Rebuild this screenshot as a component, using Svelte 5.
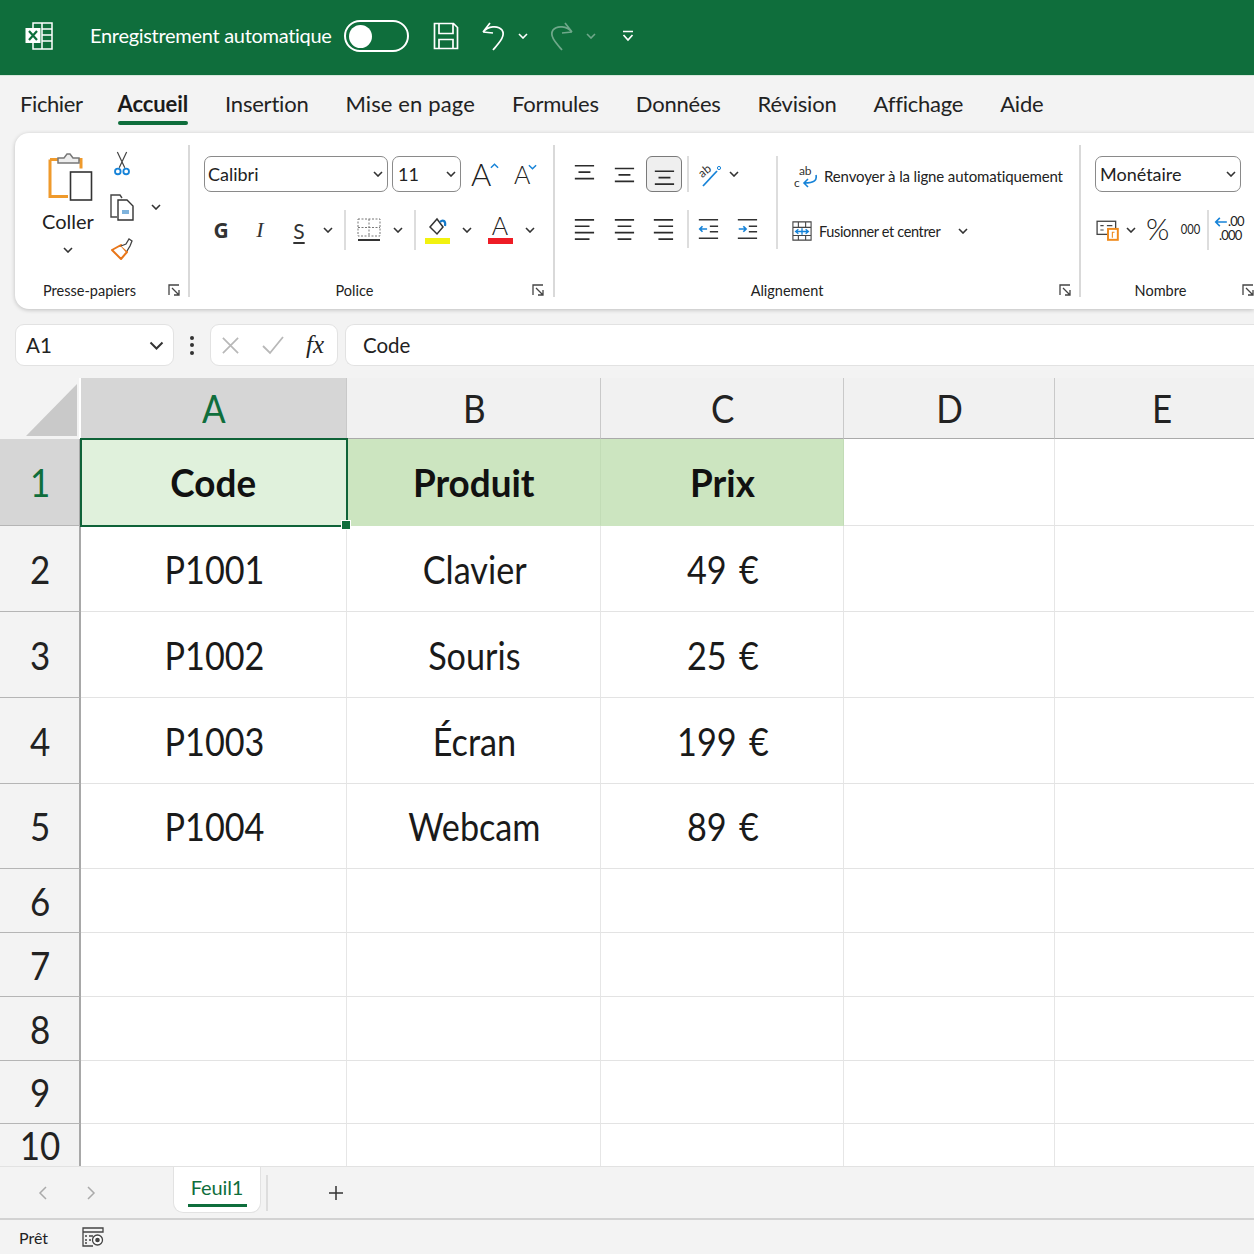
<script>
  const cols = ['A','B','C','D','E'];
  const rows = [
    { n: 1, h: 87, cells: ['Code','Produit','Prix','',''], head: true },
    { n: 2, h: 86, cells: ['P1001','Clavier','49 €','',''] },
    { n: 3, h: 86, cells: ['P1002','Souris','25 €','',''] },
    { n: 4, h: 86, cells: ['P1003','Écran','199 €','',''] },
    { n: 5, h: 85, cells: ['P1004','Webcam','89 €','',''] },
    { n: 6, h: 64, cells: ['','','','',''] },
    { n: 7, h: 64, cells: ['','','','',''] },
    { n: 8, h: 64, cells: ['','','','',''] },
    { n: 9, h: 63, cells: ['','','','',''] },
    { n: 10, h: 43, cells: ['','','','',''] }
  ];
  const tabs = ['Fichier','Accueil','Insertion','Mise en page','Formules','Données','Révision','Affichage','Aide'];
  const template = rows.map(r => r.h + 'px').join(' ');
</script>

{#snippet chev(cls = '')}
  <svg class="chev {cls}" viewBox="0 0 10 6"><path d="M1 1l4 4 4-4" /></svg>
{/snippet}

{#snippet launcher()}
  <svg class="launch" viewBox="0 0 12 12"><path d="M1 11V1h10M4 4l7 7M11 6v5H6" /></svg>
{/snippet}

{#snippet lines(kind)}
  <svg class="lines" viewBox="0 0 24 24">
    {#if kind === 'top'}<path d="M2 3h21M6 10h13M2 17h21" />
    {:else if kind === 'mid'}<path d="M2 6h21M6 13h13M2 20h21" />
    {:else if kind === 'bot'}<path d="M2 9h21M6 16h13M2 23h21" />
    {:else if kind === 'left'}<path d="M2 2h21M2 9h16M2 16h21M2 23h16" />
    {:else if kind === 'center'}<path d="M2 2h21M5 9h15M2 16h21M5 23h15" />
    {:else}<path d="M2 2h21M7 9h16M2 16h21M7 23h16" />{/if}
  </svg>
{/snippet}

<div class="app">
  <header class="title">
    <svg class="xl" viewBox="0 0 30 30">
      <path class="w" d="M9 2h19v26H9zM18 2v26M18 8h10M18 14h10M18 20h10M9 6V2M9 28v-4" />
      <rect x="1.500" y="7" width="15" height="15" fill="#fff" />
      <path d="M5 10l8 9M13 10l-8 9" stroke="#0f6e3c" stroke-width="2.200" fill="none" />
    </svg>
    <span class="autosave">Enregistrement automatique</span>
    <span class="toggle"><i></i></span>
    <svg class="qa save" viewBox="0 0 26 28"><path class="w" d="M1.500 1.500h19l4 4v21h-23zM6 1.500v10h14v-10M6 26.500v-9h14v9" /></svg>
    <svg class="qa undo" viewBox="0 0 26 30"><path class="w" d="M2 11l7-9M2 11l10 1M2 11c5-6 15-7 19-2 4 6-3 13-9 20" /></svg>
    {@render chev('wchev first')}
    <svg class="qa redo" viewBox="0 0 26 30"><path class="w" d="M24 11l-7-9M24 11l-10 1M24 11c-5-6-15-7-19-2-4 6 3 13 9 20" /></svg>
    {@render chev('wchev dim')}
    <svg class="more" viewBox="0 0 12 12"><path class="w" d="M1 1.500h10M1.500 5l4.500 5 4.500-5" /></svg>
  </header>

  <nav class="tabs">
    {#each tabs as t, i}
      <span class="tab" class:on={i === 1}>{t}</span>
    {/each}
  </nav>

  <section class="ribbon">
    <div class="group clip">
      <div class="clip-body">
        <div class="paste">
          <svg class="paste-ico" viewBox="0 0 46 50">
            <path d="M2 7.500h31v9M2 7.500v37h18" fill="none" stroke="#ef9a2c" stroke-width="3" />
            <path d="M10 11V6h6l3-4h3l3 4h6v5z" fill="#eee" stroke="#777" stroke-width="1.500" />
            <rect x="22.500" y="20" width="21" height="28" fill="#fff" stroke="#333" stroke-width="1.600" />
          </svg>
          <span class="coller">Coller</span>
          {@render chev()}
        </div>
        <div class="tools">
          <svg class="tool" viewBox="0 0 20 28"><path d="M5 1l8 17M15 1L7 18" stroke="#444" stroke-width="1.300" fill="none" /><circle cx="5.500" cy="22" r="3" fill="none" stroke="#1683d8" stroke-width="2" /><circle cx="14.500" cy="22" r="3" fill="none" stroke="#1683d8" stroke-width="2" /></svg>
          <div class="copy-row">
            <svg class="tool" viewBox="0 0 26 28"><path d="M8 24H2V2h9l2 3" fill="none" stroke="#444" stroke-width="1.400" /><path d="M9 7h9l6 6v14H9z" fill="#fff" stroke="#333" stroke-width="1.400" /><rect x="13" y="17" width="7" height="4" fill="#7fb3dc" /></svg>
            {@render chev()}
          </div>
          <svg class="tool" viewBox="0 0 24 24"><path d="M2 13l9-5 6 7-6 7z" fill="#fff" stroke="#e8761a" stroke-width="2" stroke-linejoin="round" /><path d="M11 9l5-2 3-5 3 2-2 5-3 5" fill="#fff" stroke="#444" stroke-width="1.300" /></svg>
        </div>
      </div>
      <footer><span>Presse-papiers</span>{@render launcher()}</footer>
    </div>

    <div class="group police">
      <div class="row r1">
        <div class="select font"><span>Calibri</span>{@render chev()}</div>
        <div class="select size"><span>11</span>{@render chev()}</div>
        <span class="grow">A<svg viewBox="0 0 10 6"><path d="M1 5l4-4 4 4" /></svg></span>
        <span class="grow small">A<svg viewBox="0 0 10 6"><path d="M1 1l4 4 4-4" /></svg></span>
      </div>
      <div class="row r2">
        <b class="g">G</b>
        <i class="it">I</i>
        <span class="s">S</span>
        {@render chev()}
        <span class="vr"></span>
        <svg class="border-ico" viewBox="0 0 24 24"><path d="M1 1h22v17H1zM12 1v17M1 9.500h22" fill="none" stroke="#777" stroke-width="1" stroke-dasharray="2 1.500" /><path d="M1 22h22" stroke="#333" stroke-width="2" /></svg>
        {@render chev()}
        <span class="vr"></span>
        <div class="colour">
          <svg viewBox="0 0 24 20"><path d="M5 11l7-8 6 8-6 7z" fill="#fff" stroke="#333" stroke-width="1.500" /><path d="M15 6c3-3 6-1 5 4" fill="none" stroke="#1479c9" stroke-width="2.200" /></svg>
          <span class="bar yellow"></span>
        </div>
        {@render chev()}
        <div class="colour">
          <span class="fc">A</span>
          <span class="bar red"></span>
        </div>
        {@render chev()}
      </div>
      <footer><span>Police</span>{@render launcher()}</footer>
    </div>

    <div class="group align">
      <div class="align-body">
        <div class="align-icons">
          <div class="row a1">
            <span class="ib">{@render lines('top')}</span>
            <span class="ib">{@render lines('mid')}</span>
            <span class="ib sel">{@render lines('bot')}</span>
            <span class="vr"></span>
            <svg class="orient" viewBox="0 0 28 28"><text x="4" y="15" transform="rotate(-40 10 12)">ab</text><path d="M8 26L22 11" stroke="#1683d8" stroke-width="1.800" /><circle cx="24" cy="8" r="1.600" fill="none" stroke="#1683d8" /></svg>
            {@render chev()}
          </div>
          <div class="row a2">
            <span class="ib">{@render lines('left')}</span>
            <span class="ib">{@render lines('center')}</span>
            <span class="ib">{@render lines('right')}</span>
            <span class="vr"></span>
            <svg class="indent" viewBox="0 0 24 24"><path d="M2 2h21M14 9h9M14 15h9M2 22h21" stroke="#333" stroke-width="1.700" /><path d="M11 12H3M6 9l-3 3 3 3" fill="none" stroke="#1683d8" stroke-width="1.800" /></svg>
            <svg class="indent" viewBox="0 0 24 24"><path d="M2 2h21M14 9h9M14 15h9M2 22h21" stroke="#333" stroke-width="1.700" /><path d="M3 12h8M8 9l3 3-3 3" fill="none" stroke="#1683d8" stroke-width="1.800" /></svg>
          </div>
        </div>
        <span class="vr tall"></span>
        <div class="wrap-col">
          <div class="wrap">
            <svg class="wrap-ico" viewBox="0 0 24 28"><text x="6" y="13">ab</text><text x="1" y="25">c</text><path d="M23 13c1 5-1 8-12 8M15 17l-4 4 4 4" fill="none" stroke="#1683d8" stroke-width="1.600" /></svg>
            <span>Renvoyer à la ligne automatiquement</span>
          </div>
          <div class="merge">
            <svg class="merge-ico" viewBox="0 0 22 22"><path d="M1 1h20v20H1zM1 7h20M1 16h20M7 1v6M15 1v6M7 16v5M15 16v5" fill="#fff" stroke="#444" stroke-width="1.200" /><path d="M4 11.500h14M7 9l-3 2.500L7 14M15 9l3 2.500-3 2.500M11 8v7" fill="none" stroke="#1683d8" stroke-width="1.500" /></svg>
            <span>Fusionner et centrer</span>
            {@render chev()}
          </div>
        </div>
      </div>
      <footer><span>Alignement</span>{@render launcher()}</footer>
    </div>

    <div class="group nombre">
      <div class="select num"><span>Monétaire</span>{@render chev()}</div>
      <div class="row n2">
        <svg class="acct" viewBox="0 0 22 20"><rect x="1" y="2" width="17" height="12" fill="#fff" stroke="#444" stroke-width="1.200" /><path d="M4 6h3M4 10h3M10 6h5" stroke="#444" /><rect x="11" y="9" width="9" height="10" fill="#fff" stroke="#ef8a1c" stroke-width="1.800" /><path d="M17 12h-2v5" fill="none" stroke="#ef8a1c" /></svg>
        {@render chev()}
        <span class="pct">%</span>
        <span class="mil">000</span>
        <span class="vr"></span>
        <div class="dec"><svg viewBox="0 0 12 10"><path d="M11 5H2M5 1.500L1.500 5 5 8.500" fill="none" stroke="#1683d8" stroke-width="1.400" /></svg><span class="t1">.00</span><span class="t2">.000</span></div>
      </div>
      <footer><span>Nombre</span>{@render launcher()}</footer>
    </div>
  </section>

  <div class="fbar">
    <div class="name box"><span>A1</span><svg class="chev big" viewBox="0 0 10 6"><path d="M1 1l4 4 4-4" /></svg></div>
    <span class="dots"><i></i><i></i><i></i></span>
    <div class="actions box">
      <svg viewBox="0 0 20 20"><path d="M2 2l16 16M18 2L2 18" /></svg>
      <svg viewBox="0 0 24 20"><path d="M2 11l7 7L22 2" /></svg>
      <em>fx</em>
    </div>
    <div class="formula box">Code</div>
  </div>

  <div class="sheet">
    <div class="corner"><span></span></div>
    {#each cols as c, i}
      <div class="ch" class:active={i === 0}><span>{c}</span></div>
    {/each}
    <div class="body" style="grid-template-rows: {template}">
      {#each rows as r}
        <div class="rh" class:active={r.n === 1}><span>{r.n}</span></div>
        {#each r.cells as cell, i}
          <div class="cell" class:hd={r.head && i < 3} class:sel={r.n === 1 && i === 0}>
            {#if cell}<span>{cell}</span>{/if}
            {#if r.n === 1 && i === 0}<i class="handle"></i>{/if}
          </div>
        {/each}
      {/each}
    </div>
  </div>

  <div class="sheets">
    <svg class="nav first-nav" viewBox="0 0 10 16"><path d="M8 2L2 8l6 6" /></svg>
    <svg class="nav" viewBox="0 0 10 16"><path d="M2 2l6 6-6 6" /></svg>
    <div class="stab"><span>Feuil1</span></div>
    <span class="sep"></span>
    <svg class="plus" viewBox="0 0 16 16"><path d="M8 1v14M1 8h14" /></svg>
  </div>

  <footer class="status">
    <span>Prêt</span>
    <svg viewBox="0 0 22 20"><path d="M1 1h20v4H1zM1 5v14h10M3 9h2M7 9h4M3 13h2M7 13h2M3 16h2" fill="none" stroke="#444" stroke-width="1.300" /><circle cx="15.500" cy="13" r="5" fill="#fff" stroke="#444" stroke-width="1.300" /><circle cx="15.500" cy="13" r="2.300" fill="#444" /></svg>
  </footer>
</div>

<style>
  :global(body) { margin: 0; background: #f3f3f3; }
  .app {
    width: 1254px; height: 1254px; overflow: hidden;
    display: flex; flex-direction: column;
    font-family: "Open Sans", "Noto Sans", sans-serif; color: #222; background: #f3f3f3;
  }
  svg { display: block; flex: none; }
  .w { fill: none; stroke: #fff; stroke-width: 1.700; }

  .title {
    height: 76px; flex: none; background: #0f6e3c; display: flex; align-items: center;
    color: #fff; padding: 0 0 3px 24px; box-sizing: border-box; border-bottom: 1px solid #d7e7dc;
  }
  .xl { width: 30px; height: 30px; }
  .xl .w { stroke-width: 1.500; }
  .autosave { margin: 0 0 2px 36px; font: 20px "Lato", sans-serif; letter-spacing: -.3px; width: 254px; white-space: nowrap; }
  .toggle { width: 65px; height: 32px; border: 2px solid #fff; border-radius: 17px; box-sizing: border-box; display: flex; align-items: center; padding-left: 3px; flex: none; }
  .toggle i { width: 23px; height: 23px; border-radius: 50%; background: #fff; display: block; }
  .qa.save { width: 26px; height: 28px; margin-left: 24px; }
  .qa.undo { width: 26px; height: 30px; margin-left: 22px; }
  .qa.redo { width: 26px; height: 30px; margin-left: 20px; opacity: .4; }
  :global(.chev) { width: 10px; height: 6px; fill: none; stroke: #333; stroke-width: 1.600; flex: none; }
  .title :global(.wchev) { stroke: #fff; margin-left: 11px; }
  .title :global(.wchev.dim) { opacity: .4; margin-left: 12px; }
  .more { width: 12px; height: 12px; margin-left: 26px; }

  .tabs { height: 57px; flex: none; display: flex; gap: 37px; padding: 16px 0 0 20px; box-sizing: border-box; font: 22px "Lato", sans-serif; color: #222; }
  .tab { position: relative; height: 32px; line-height: 24px; white-space: nowrap; letter-spacing: -.22px; }
  .tab:first-child { letter-spacing: -.4px; }
  .tab:nth-child(4) { letter-spacing: .12px; }
  .tab.on { font-weight: 700; color: #1b1b1b; letter-spacing: -.1px; margin-left: -2px; }
  .tab.on::after { content: ""; position: absolute; left: 0; right: 0; bottom: -1px; height: 4px; background: #0f6e3c; border-radius: 2px; }

  .ribbon {
    margin-left: 15px; height: 176px; flex: none; background: #fff; border-radius: 14px 0 0 14px;
    box-shadow: 0 1px 4px rgba(0,0,0,.22); display: flex; font: 15px "Lato", sans-serif; color: #222; box-sizing: border-box;
  }
  .group { position: relative; height: 100%; box-sizing: border-box; flex: none; }
  .group::after { content: ""; position: absolute; right: 0; top: 12px; bottom: 12px; width: 2px; background: #d9d9d9; }
  .group footer { position: absolute; left: 0; right: 2px; bottom: 9px; height: 20px; display: flex; justify-content: center; align-items: center; font-size: 14.500px; box-sizing: border-box; }
  :global(.launch) { position: absolute; right: 7px; top: 4px; width: 12px; height: 12px; fill: none; stroke: #444; stroke-width: 1.300; }

  .clip { width: 175px; }
  .clip footer { padding-right: 24px; }
  .clip footer :global(.launch) { right: 8px; }
  .clip-body { display: flex; padding: 19px 0 0 28px; }
  .paste { width: 50px; display: flex; flex-direction: column; align-items: center; }
  .paste-ico { width: 46px; height: 50px; margin-left: 6px; }
  .coller { font-size: 20px; margin-top: 7px; line-height: 24px; }
  .paste :global(.chev) { margin-top: 14px; }
  .tools { margin-left: 14px; display: flex; flex-direction: column; align-items: flex-start; padding-left: 5px; }
  .tool { width: 20px; height: 26px; margin-top: -1px; }
  .copy-row { display: flex; align-items: center; gap: 16px; margin-top: 16px; margin-left: -3px; }
  .copy-row .tool { width: 26px; height: 28px; margin: 0; }
  .tools > .tool:last-child { width: 24px; height: 24px; margin-top: 16px; margin-left: -2px; }

  .police { width: 365px; padding: 23px 0 0 14px; }
  .police footer { padding-right: 34px; }
  .police footer :global(.launch) { right: 9px; }
  .row { display: flex; align-items: center; }
  .select { height: 36px; flex: none; border: 1.500px solid #8a8a8a; border-radius: 7px; box-sizing: border-box; display: flex; align-items: center; justify-content: space-between; padding: 0 4px 0 3px; font-size: 18px; background: #fff; }
  .font { width: 184px; }
  .size { width: 69px; margin-left: 4px; padding-left: 5px; }
  .grow { font: 300 31px "Lato", sans-serif; width: 40px; position: relative; margin-left: 10px; line-height: 36px; flex: none; box-sizing: border-box; }
  .grow svg { position: absolute; left: 19px; top: 7px; width: 9px; height: 6px; fill: none; stroke: #1683d8; stroke-width: 1.600; }
  .grow.small { font-size: 25px; margin-left: 0; padding-left: 3px; }
  .grow.small svg { left: 17px; top: 8px; }
  .r2 { margin-top: 18px; height: 40px; }
  .g { width: 34px; text-align: center; font: 700 21px "Open Sans", sans-serif; color: #333; flex: none; }
  .it { width: 44px; text-align: center; font: italic 22px "Liberation Serif", serif; color: #333; flex: none; }
  .s { width: 34px; text-align: center; font: 21px "Lato", sans-serif; text-decoration: underline; text-underline-offset: 3px; color: #333; flex: none; }
  .r2 :global(.chev) { margin-left: 7px; }
  .vr { width: 2px; align-self: stretch; background: #ddd; flex: none; }
  .r2 .vr { margin-left: 11px; }
  .border-ico { width: 24px; height: 24px; margin-left: 11px; }
  .r2 .border-ico + :global(.chev) { margin-left: 12px; }
  .colour { width: 26px; height: 30px; flex: none; display: flex; flex-direction: column; align-items: center; justify-content: flex-end; margin: 0 0 2px 8px; }
  .colour svg { width: 24px; height: 20px; }
  .colour + :global(.chev) { margin-left: 12px !important; }
  .colour .bar { width: 25px; height: 6px; display: block; margin-top: 2px; }
  .yellow { background: #f2f20f; }
  .red { background: #ee1c25; }
  .fc { font-size: 25px; line-height: 22px; font-weight: 300; }
  .r2 .colour:nth-of-type(2) { margin-left: 15px; }

  .align { width: 526px; padding: 23px 0 0 11px; }
  .align footer { padding-right: 60px; }
  .align footer :global(.launch) { right: 8px; }
  .align-body { display: flex; }
  .align-icons { display: flex; flex-direction: column; width: 210px; flex: none; }
  .a1, .a2 { height: 36px; }
  .a2 { margin-top: 18px; height: 38px; }
  .ib { width: 36px; height: 36px; margin-right: 3.500px; display: flex; align-items: center; justify-content: center; border-radius: 6px; box-sizing: border-box; flex: none; }
  .ib.sel { background: #efefef; border: 1.500px solid #7a7a7a; margin-left: 1px; margin-right: 2.500px; }
  .lines { width: 22px; height: 24px; fill: none; stroke: #2c2c2c; stroke-width: 1.900; }
  .a1 .vr, .a2 .vr { margin-left: 2px; }
  .orient { width: 28px; height: 28px; margin-left: 6px; }
  .orient text, .wrap-ico text { font: 12px "Lato", sans-serif; fill: #333; }
  .a1 :global(.chev) { margin-left: 6px; }
  .indent { width: 22px; height: 24px; margin-left: 8px; }
  .indent + .indent { margin-left: 17px; }
  .tall { height: 93px; }
  .wrap-col { display: flex; flex-direction: column; padding-left: 14px; font-size: 15px; white-space: nowrap; }
  .wrap { display: flex; align-items: center; gap: 7px; height: 40px; letter-spacing: -.13px; }
  .wrap-ico { width: 24px; height: 28px; margin-left: 1px; }
  .wrap-ico text { font-size: 12px; }
  .merge { display: flex; align-items: center; gap: 7px; margin-top: 15px; height: 40px; font-size: 14.500px; letter-spacing: -.35px; }
  .merge-ico { width: 20px; height: 22px; }
  .merge :global(.chev) { margin-left: 11px; }

  .nombre { width: 173px; padding: 23px 0 0 14px; }
  .nombre::after { display: none; }
  .nombre footer { padding-right: 14px; right: 0; }
  .nombre footer :global(.launch) { right: 0; }
  .num { width: 146px; padding-left: 4px; }
  .n2 { margin-top: 18px; height: 40px; margin-left: 1px; }
  .acct { width: 24px; height: 22px; }
  .n2 :global(.chev) { margin-left: 6px; }
  .pct { font-size: 30px; margin-left: 10px; font-weight: 300; width: 22px; margin-bottom: 4px; flex: none; }
  .mil { font-size: 14px; margin: 0 0 4px 10px; width: 28px; transform: scaleX(.8); flex: none; }
  .n2 .vr { margin-left: 1px; }
  .dec { position: relative; width: 32px; height: 32px; margin-left: 5px; font-size: 13px; line-height: 13px; flex: none; overflow: hidden; }
  .dec svg { position: absolute; left: 0; top: 2px; width: 14px; height: 12px; }
  .dec .t1 { position: absolute; left: 14px; top: 1px; letter-spacing: -.8px; }
  .dec .t2 { position: absolute; left: 5px; top: 15px; letter-spacing: -.8px; }

  .fbar { height: 42px; flex: none; margin-top: 15px; padding-left: 15px; display: flex; align-items: stretch; }
  .box { background: #fff; border: 1.500px solid #e2e2e2; border-radius: 9px; box-sizing: border-box; display: flex; align-items: center; }
  .name { width: 159px; justify-content: space-between; padding: 0 9px 0 10px; font: 20.500px "Lato", sans-serif; }
  .chev.big { width: 15px; height: 9px; stroke-width: 1.300; }
  .dots { width: 36px; display: flex; flex-direction: column; align-items: center; justify-content: center; gap: 3.500px; }
  .dots i { width: 4px; height: 4px; border-radius: 50%; background: #333; display: block; }
  .actions { width: 128px; padding-left: 10px; }
  .actions svg { fill: none; stroke: #b8b8b8; stroke-width: 1.800; }
  .actions svg:nth-child(1) { width: 19px; height: 19px; }
  .actions svg:nth-child(2) { width: 24px; height: 20px; margin-left: 21px; }
  .actions em { font: italic 25px "Liberation Serif", serif; margin-left: 21px; color: #222; }
  .formula { flex: 1; margin-left: 7px; padding-left: 17px; font: 20.500px "Lato", sans-serif; border-right: 0; border-radius: 9px 0 0 9px; }

  .sheet {
    height: 789px; flex: none; margin-top: 12px; display: grid;
    grid-template-columns: 81px 266px 254px 243px 211px 214px; grid-template-rows: 61px 1fr; overflow: hidden;
  }
  .corner { background: #f3f3f3; border-right: 2px solid #fff; display: flex; align-items: flex-end; justify-content: flex-end; padding: 0 2px 3px 0; box-sizing: border-box; }
  .corner span { width: 51px; height: 52px; background: #c9c9c9; clip-path: polygon(100% 0, 100% 100%, 0 100%); display: block; }
  .ch { background: #f1f1f1; border-right: 1px solid #c9c9c9; border-bottom: 1.500px solid #aaa; box-sizing: border-box; display: flex; align-items: center; justify-content: center; font: 38px "Lato", sans-serif; color: #222; }
  .ch span, .rh span { display: inline-block; transform: scaleX(.92); margin-left: 1px; }
  .ch.active { background: #d6d6d6; color: #0f6e3c; }
  .ch:last-of-type { border-right: 0; }
  .body { grid-column: 1 / -1; display: grid; grid-template-columns: subgrid; background: #fff; }
  .rh { background: #f3f3f3; border-right: 2px solid #a8a8a8; border-bottom: 1.500px solid #b5b5b5; box-sizing: border-box; display: flex; align-items: center; justify-content: center; font: 38px "Lato", sans-serif; color: #222; }
  .rh.active { background: #d6d6d6; color: #0f6e3c; }
  .cell { border-right: 1px solid #e6e6e6; border-bottom: 1px solid #e3e3e3; box-sizing: border-box; display: flex; align-items: center; justify-content: center; font: 38px "Lato", sans-serif; color: #1a1a1a; position: relative; }
  .cell span { display: inline-block; transform: scaleX(.9); white-space: nowrap; word-spacing: 4px; margin-left: 2px; }
  .cell.hd { background: #cce5c0; font-weight: 700; border-bottom-color: #cce5c0; border-right-color: #c2dcb6; color: #111; }
  .cell.hd span { transform: scaleX(.97); margin-left: 0; }
  .cell.sel { background: #e0f1dc; outline: 2.500px solid #0f6338; outline-offset: -1px; z-index: 1; }
  .handle { position: absolute; right: -5px; bottom: -5px; width: 8px; height: 8px; background: #0f6e3c; border: 1px solid #fff; }

  .sheets { height: 54px; flex: none; margin-top: -1px; position: relative; z-index: 2; background: #f3f3f3; border-top: 1.500px solid #e2e2e2; border-bottom: 2px solid #d2d2d2; box-sizing: border-box; display: flex; align-items: center; }
  .nav { width: 10px; height: 16px; fill: none; stroke: #aaa; stroke-width: 1.500; margin-left: 38px; }
  .stab { margin-left: 77px; width: 88px; height: 46px; margin-top: -5px; background: #fff; border: 1.500px solid #e2e2e2; border-top: 0; border-radius: 0 0 10px 10px; box-sizing: border-box; display: flex; justify-content: center; }
  .stab span { color: #0f6e3c; font: 20px "Lato", sans-serif; line-height: 30px; border-bottom: 3px solid #0f6e3c; padding: 5px 2px 0; box-sizing: border-box; height: 40px; width: 59px; text-align: center; letter-spacing: -.1px; }
  .sep { width: 1.500px; height: 36px; background: #ddd; margin-left: 5px; }
  .plus { width: 16px; height: 16px; margin-left: 60px; fill: none; stroke: #333; stroke-width: 1.500; }

  .status { height: 34px; flex: none; display: flex; align-items: center; font: 16px "Lato", sans-serif; padding-left: 19px; }
  .status svg { width: 22px; height: 20px; margin-left: 34px; }
</style>
